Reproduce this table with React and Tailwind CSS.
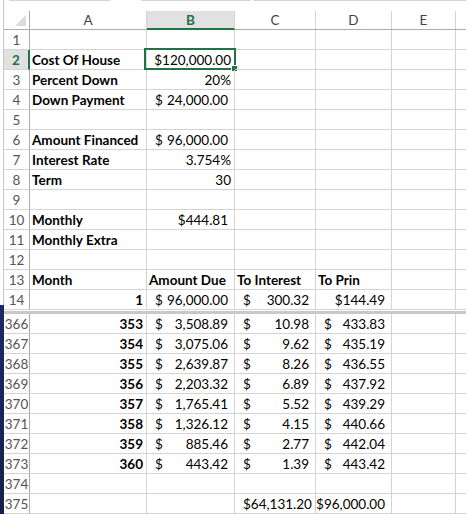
import React from "react";

const grid = "border-r border-b border-[#d4d4d4]";
const widths = ["w-[117px]", "w-[88px]", "w-[81px]", "w-[76px]", "w-[64px]"];

// accounting format: $ on the left, number pushed right
const Acct = ({ v }) => (
  <div className="flex justify-between pl-[8px] pr-[6px]">
    <span>$</span>
    <span>{v}</span>
  </div>
);

const Right = ({ v, pr = "pr-[3px]", bold }) => (
  <div className={`text-right ${pr} ${bold ? "font-bold" : ""}`}>{v}</div>
);

const Left = ({ v }) => <div className="pl-[2px] font-bold whitespace-nowrap">{v}</div>;

const topRows = [
  { n: 1 },
  { n: 2, a: <Left v="Cost Of House" />, b: <Right v="$120,000.00" />, sel: true },
  { n: 3, a: <Left v="Percent Down" />, b: <Right v="20%" /> },
  { n: 4, a: <Left v="Down Payment" />, b: <Acct v="24,000.00" /> },
  { n: 5 },
  { n: 6, a: <Left v="Amount Financed" />, b: <Acct v="96,000.00" /> },
  { n: 7, a: <Left v="Interest Rate" />, b: <Right v="3.754%" /> },
  { n: 8, a: <Left v="Term" />, b: <Right v="30" /> },
  { n: 9 },
  { n: 10, a: <Left v="Monthly" />, b: <Right v="$444.81" pr="pr-[6px]" /> },
  { n: 11, a: <Left v="Monthly Extra" /> },
  { n: 12 },
  {
    n: 13,
    a: <Left v="Month" />,
    b: <Left v="Amount Due" />,
    c: <Left v="To Interest" />,
    d: <Left v="To Prin" />,
  },
  {
    n: 14,
    a: <Right v="1" bold />,
    b: <Acct v="96,000.00" />,
    c: <Acct v="300.32" />,
    d: <Right v="$144.49" pr="pr-[6px]" />,
  },
];

const schedule = [
  [353, "3,508.89", "10.98", "433.83"],
  [354, "3,075.06", "9.62", "435.19"],
  [355, "2,639.87", "8.26", "436.55"],
  [356, "2,203.32", "6.89", "437.92"],
  [357, "1,765.41", "5.52", "439.29"],
  [358, "1,326.12", "4.15", "440.66"],
  [359, "885.46", "2.77", "442.04"],
  [360, "443.42", "1.39", "443.42"],
];

const bottomRows = [
  ...schedule.map(([m, due, int, prin], i) => ({
    n: 366 + i,
    a: <Right v={m} bold />,
    b: <Acct v={due} />,
    c: <Acct v={int} />,
    d: <Acct v={prin} />,
  })),
  { n: 374 },
  {
    n: 375,
    c: <Acct v="64,131.20" />,
    d: <Right v="$96,000.00" pr="pr-[6px]" />,
  },
];

const Row = ({ n, a, b, c, d, sel }) => (
  <div className="flex h-[20px] leading-[20px]">
    <div
      className={`w-[26px] shrink-0 text-center border-b border-[#d4d4d4] ${
        sel
          ? "bg-[#e1e1e1] border-r-2 border-r-[#217346] text-[#217346] font-bold"
          : "border-r border-r-[#ababab] text-[#555]"
      }`}
    >
      {n}
    </div>
    {[a, b, c, d, null].map((v, i) => (
      <div key={i} className={`${widths[i]} shrink-0 ${grid} relative`}>
        {v}
        {sel && i === 1 && (
          <>
            <div className="absolute left-[-3px] top-[-2px] w-[92px] h-[22px] border-2 border-[#217346]" />
            <div className="absolute left-[84px] top-[15px] w-[7px] h-[7px] bg-[#217346] border border-white" />
          </>
        )}
      </div>
    ))}
    <div className="flex-1 border-b border-[#d4d4d4]" />
  </div>
);

export default function App() {
  return (
    <div
      className="w-[466px] h-[514px] overflow-hidden bg-white flex text-[13.5px] text-black"
      style={{ fontFamily: "Lato, 'Liberation Sans', sans-serif" }}
    >
      <div className="w-[4px] shrink-0 flex flex-col">
        <div className="h-[305px] bg-white border-r border-[#c8c8c8]" />
        <div className="flex-1 bg-gradient-to-b from-[#1c2a66] to-[#13204f]" />
      </div>

      <div className="flex-1 flex flex-col">
        <div className="flex h-[1px]">
          <div className="w-[5px]" />
          <div className="w-[101px] bg-[#d4d4d4]" />
          <div className="w-[31px]" />
          <div className="w-[110px] bg-[#d4d4d4]" />
          <div className="w-[3px]" />
          <div className="flex-1 bg-[#d4d4d4]" />
        </div>
        <div className="h-[11px]" />

        {/* column headers */}
        <div className="flex h-[19px] leading-[18px] text-[#444] border-b border-[#ababab]">
          <div className="w-[26px] shrink-0 border-r border-[#ababab] flex items-end justify-end pr-[3px] pb-[3px]">
            <svg width="11" height="11" viewBox="0 0 11 11">
              <polygon points="11,0 11,11 0,11" fill="#dcdcdc" />
            </svg>
          </div>
          <div className="w-[117px] shrink-0 border-r border-[#d4d4d4] text-center">A</div>
          <div className="w-[88px] shrink-0 border-r border-[#d4d4d4] text-center bg-[#e1e1e1] text-[#217346] font-bold border-b-2 border-b-[#217346] mb-[-1px]">
            B
          </div>
          <div className="w-[81px] shrink-0 border-r border-[#d4d4d4] text-center">C</div>
          <div className="w-[76px] shrink-0 border-r border-[#d4d4d4] text-center">D</div>
          <div className="w-[64px] shrink-0 border-r border-[#d4d4d4] text-center">E</div>
          <div className="flex-1" />
        </div>

        {topRows.map((r) => (
          <Row key={r.n} {...r} />
        ))}

        <div className="h-[1px] bg-white" />
        <div className="h-[3px] bg-[#c8c8c8]" />

        {bottomRows.map((r) => (
          <Row key={r.n} {...r} />
        ))}
      </div>
    </div>
  );
}
